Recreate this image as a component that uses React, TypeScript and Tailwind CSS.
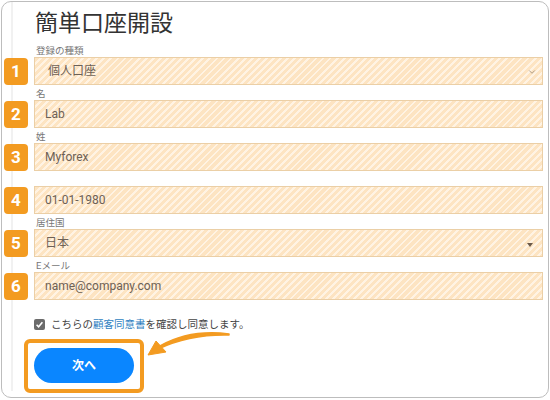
import { ChevronDown } from 'lucide-react';

const stripe =
  'bg-[image:repeating-linear-gradient(135deg,#fde4c2_0px,#fde4c2_3px,#fff3e3_3px,#fff3e3_5px)]';

type Field = {
  n: number;
  label: string;
  value: string;
  kind?: 'select' | 'dropdown';
  indent?: boolean;
};

const fields: Field[] = [
  { n: 1, label: '登録の種類', value: '個人口座', kind: 'select', indent: true },
  { n: 2, label: '名', value: 'Lab' },
  { n: 3, label: '姓', value: 'Myforex' },
  { n: 4, label: '', value: '01-01-1980' },
  { n: 5, label: '居住国', value: '日本', kind: 'dropdown' },
  { n: 6, label: 'Eメール', value: 'name@company.com' },
];

function Row({ f }: { f: Field }) {
  return (
    <div className="flex flex-col">
      <div className="h-[15px] pl-[33px] pt-[3px] text-[9.5px] leading-[12px] text-[#777]">
        {f.label}
      </div>
      <div className="flex items-start gap-[6px]">
        <div className="ml-[1px] mt-[1px] flex h-[27px] w-[24px] items-center justify-center rounded-[4px] bg-[#f39b21] text-[17px] font-bold text-white">
          {f.n}
        </div>
        <div
          className={`relative flex h-[28px] w-[509px] items-center border border-[#ebcfa6] ${stripe} ${
            f.indent ? 'pl-[13px]' : 'pl-[10px]'
          } text-[12px] text-[#6d6156]`}
        >
          {f.value}
          {f.kind === 'select' && (
            <ChevronDown
              size={10}
              strokeWidth={1.6}
              className="absolute right-[5px] top-[9px] text-[#8a7c6e]"
            />
          )}
          {f.kind === 'dropdown' && (
            <span className="absolute right-[9px] top-[13px] h-0 w-0 border-x-[3.5px] border-t-[4px] border-x-transparent border-t-[#6b5a4a]" />
          )}
        </div>
      </div>
    </div>
  );
}

export default function App() {
  return (
    <div
      className="relative h-[400px] w-[550px] bg-white"
      style={{ fontFamily: 'Roboto, "Noto Sans CJK JP", sans-serif' }}
    >
      <div className="relative ml-[1px] mt-[1px] h-[397px] w-[548px] overflow-hidden rounded-[10px] border border-[#bdbdbd] bg-white">
        {/* faint inner panel edge */}
        <div className="absolute bottom-[6px] left-[9px] top-0 w-[2px] bg-[#f1f1f1]" />

        <div className="relative flex flex-col pl-[1px]">
          <h1 className="h-[40px] pl-[32px] pt-[7px] text-[23px] font-normal leading-[30px] text-[#333]">
            簡単口座開設
          </h1>

          {fields.map((f) => (
            <Row key={f.n} f={f} />
          ))}

          <div className="mt-[17px] flex items-center gap-[6px] pl-[31px] text-[10.5px] text-[#444]">
            <svg width="11" height="11" viewBox="0 0 11 11">
              <rect x="0" y="0" width="11" height="11" rx="2" fill="#6b6b6b" />
              <path d="M2.6 5.7 L4.6 7.7 L8.4 3.2" stroke="#fff" strokeWidth="1.6" fill="none" />
            </svg>
            <span>
              こちらの<span className="text-[#2f7fc1]">顧客同意書</span>を確認し同意します。
            </span>
          </div>

          <div className="ml-[21px] mt-[6px] flex h-[54px] w-[120px] items-center justify-center rounded-[6px] border-[4px] border-[#f39b21]">
            <button className="h-[35px] w-[100px] rounded-full bg-[#0a86ff] text-[12px] font-bold text-white">
              次へ
            </button>
          </div>
        </div>
      </div>

      {/* curved pointer arrow */}
      <svg className="pointer-events-none absolute left-0 top-0" width="550" height="400">
        <path
          d="M229 333 Q190 328 160 345 L158 348 Q190 333 229 334 Z"
          fill="#f39b21"
          stroke="#f39b21"
          strokeWidth="1.5"
          strokeLinejoin="round"
        />
        <path d="M148 354 L156 340 L166 351 Z" fill="#f39b21" stroke="#f39b21" strokeWidth="1" strokeLinejoin="round" />
      </svg>
    </div>
  );
}
